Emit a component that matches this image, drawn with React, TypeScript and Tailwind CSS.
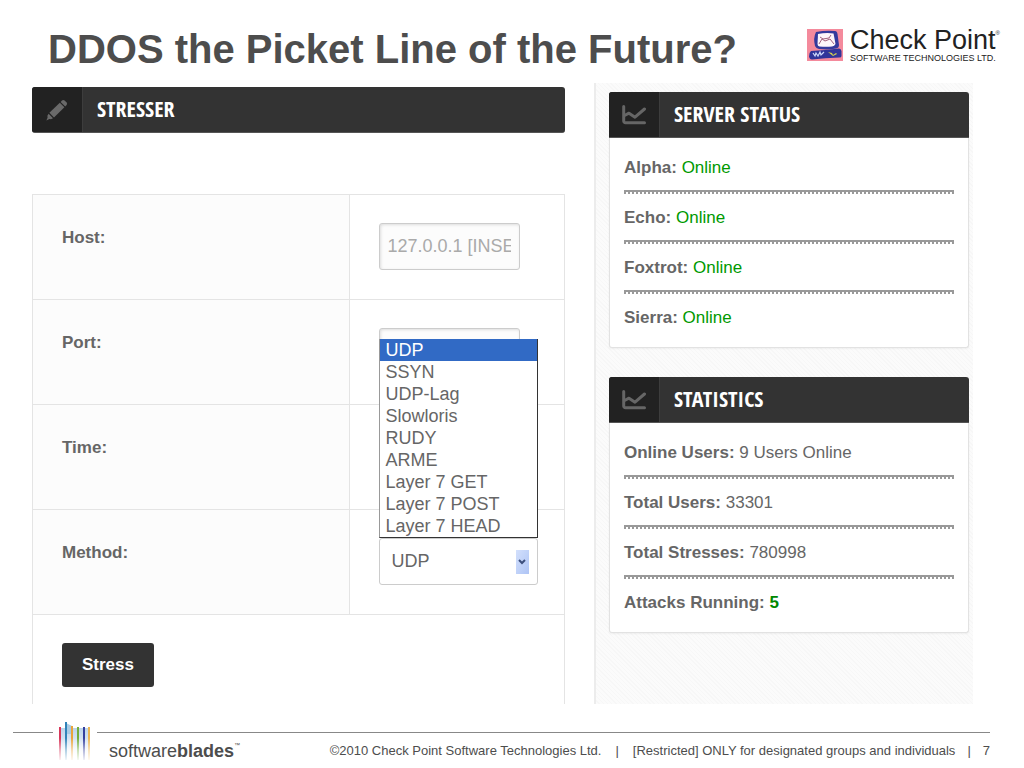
import { useState } from "react";
import type { ReactNode } from "react";

const methods = ["UDP", "SSYN", "UDP-Lag", "Slowloris", "RUDY", "ARME", "Layer 7 GET", "Layer 7 POST", "Layer 7 HEAD"];

const servers = ["Alpha", "Echo", "Foxtrot", "Sierra"];

const stats = [
  { label: "Online Users", value: "9 Users Online" },
  { label: "Total Users", value: "33301" },
  { label: "Total Stresses", value: "780998" },
];

function PencilIcon() {
  return (
    <svg viewBox="0 0 24 24" className="w-6 h-6" fill="#6a6a6a" aria-hidden="true">
      <path d="M17 2.500a2 2 0 0 1 2.600 0l2 2a2 2 0 0 1 0 2.600l-1.400 1.400-4.600-4.600z" />
      <path d="M14.800 4.700l4.600 4.600L9 19.400l-4.600-4.600z" />
      <path d="M3.600 15.800l4.400 4.400-2 1-1.600-.2-3 1.400 1.200-3-.2-1.600z" />
    </svg>
  );
}

function ChartIcon() {
  return (
    <svg viewBox="0 0 24 20" className="w-6 h-5" fill="none" stroke="#666" strokeLinecap="round" aria-hidden="true">
      <path d="M1.700 1.500v14.500a1.800 1.800 0 0 0 1.800 1.800H22.500" strokeWidth="3" />
      <path d="M2.500 10.500l4.500-2.300 6 4L22.500 4" strokeWidth="3" strokeLinejoin="round" />
    </svg>
  );
}

function CheckPointMark() {
  return (
    <svg viewBox="0 0 36 32" className="mt-[2px] w-9 h-8 shrink-0" aria-hidden="true">
      <rect width="36" height="32" fill="#f48a9c" />
      <path d="M9 3q10-2 19-1 2 0 2.500 3L32 16q0 3-3 3.500-8 1.500-17 .5-3-.5-4-3Q6 9 9 3z" fill="#343a9c" />
      <path d="M11 5q8-1.500 15.500-.5L28.500 15q-1 2-3.500 2.500-6 .5-12.500 0-2-.5-2-2.500z" fill="#fdf6fa" />
      <path d="M12 15l3-5 3 2 5-2 4 5M13 8l3 2 6-1M24 6l-2 3" fill="none" stroke="#a0607c" />
      <path d="M4 22q14-1 28-2.500 2 0 2.500 2.500v5q0 1.500-2 1.500Q18 29 5 30.500q-2.500 0-3-3 0-4 2-5.500z" fill="#30359a" />
      <path d="M6 24l2 3 1-3 2 3 2-4 1 3 3-3" fill="none" stroke="#cdd8fa" strokeWidth="1.200" />
      <path d="M21 23l4 1 1 2 3-2 1 1-4 2z" fill="#d2d34e" />
    </svg>
  );
}

function BladesMark() {
  const blades = [
    { x: 0, y: 5, color: "#d7375a" },
    { x: 6, y: 0, color: "#2f83b8" },
    { x: 12, y: 4, color: "#eaa43a" },
    { x: 18, y: 5, color: "#72ae3b" },
    { x: 24, y: 5, color: "#353f9e" },
    { x: 29, y: 5, color: "#edb653" },
  ];
  return (
    <svg viewBox="0 0 32 40" className="w-8 h-10" aria-hidden="true">
      <defs>
        <linearGradient id="shine" x1="0" y1="0" x2="0" y2="1">
          <stop offset="0" stopColor="#bcd4ea" />
          <stop offset="0.6" stopColor="#e4ecf6" />
          <stop offset="1" stopColor="#fff" />
        </linearGradient>
        <linearGradient id="fade" x1="0" y1="0" x2="0" y2="1">
          <stop offset="0.4" stopColor="#fff" stopOpacity="0" />
          <stop offset="0.7" stopColor="#fff" stopOpacity="0.6" />
          <stop offset="1" stopColor="#fff" />
        </linearGradient>
      </defs>
      <rect x="2" y="6" width="29" height="29" fill="url(#shine)" />
      <path d="M7 1l6 3v8H7z" fill="#a9cbe4" />
      {blades.map((b) => (
        <rect key={b.x} x={b.x} y={b.y} width="2" height={38 - b.y} fill={b.color} />
      ))}
      <rect y="0" width="32" height="40" fill="url(#fade)" />
    </svg>
  );
}

function PanelHeader({ icon, title, className = "" }: { icon: ReactNode; title: string; className?: string }) {
  return (
    <div className={`flex h-[46px] overflow-hidden border-b border-[#555] bg-[#333] ${className}`}>
      <div className="flex w-[51px] shrink-0 items-center justify-center border-r border-[#3d3d3d] bg-[#222]">{icon}</div>
      <h2 className="pl-[14px] font-['Open_Sans_Condensed','Liberation_Sans',sans-serif] text-[22px] leading-[42px] font-bold text-white">
        {title}
      </h2>
    </div>
  );
}

function Panel({ title, children }: { title: string; children: ReactNode }) {
  return (
    <section>
      <PanelHeader icon={<ChartIcon />} title={title} className="rounded-t-[3px]" />
      <ul className="rounded-b-[3px] border border-t-0 border-[#e2e2e2] bg-white px-[14px] pt-[18px] pb-[17px] shadow-xs">
        {children}
      </ul>
    </section>
  );
}

function PanelRow({ label, children }: { label: string; children: ReactNode }) {
  return (
    <li className="group leading-6">
      <b>{label}:</b> {children}
      <div className="mt-[10px] mb-3 h-1 border-b-2 border-dotted border-[#999] bg-[#999] bg-clip-padding group-last:hidden" />
    </li>
  );
}

function FormRow({ id, label, children }: { id: string; label: string; children: ReactNode }) {
  return (
    <tr className="h-[105px] border-b border-[#e4e4e4]">
      <th scope="row" className="w-[59.5%] border-r border-[#e4e4e4] bg-[#fcfcfc] pt-7 pl-[29px] text-left align-top leading-[30px]">
        <label htmlFor={id}>{label}:</label>
      </th>
      <td className="pt-7 pl-[29px] align-top">{children}</td>
    </tr>
  );
}

const inputClass =
  "block h-[47px] w-[141px] rounded-[3px] border border-[#ccc] bg-[#fcfcfc] px-2 text-[18px] shadow-[inset_1px_1px_3px_#ddd] placeholder:text-[#aaa]";

export default function App() {
  const [method, setMethod] = useState("UDP");

  return (
    <div className="flex min-h-screen flex-col bg-white font-['Liberation_Sans',Arial,sans-serif] text-[17px] text-[#666]">
      <header className="flex h-[83px] items-start justify-between pr-6 pl-12">
        <h1 className="pt-6 text-[40px] leading-[50px] font-bold text-[#4d4d4d]">DDOS the Picket Line of the Future?</h1>
        <div className="flex gap-[7px] pt-[27px] text-[#222]">
          <CheckPointMark />
          <div className="whitespace-nowrap">
            <div className="flex text-[27px] leading-[26px]">
              Check Point<span className="text-[6px] leading-3">®</span>
            </div>
            <div className="text-[9px] leading-[10px]">SOFTWARE TECHNOLOGIES LTD.</div>
          </div>
        </div>
      </header>

      <main className="grid flex-1 grid-cols-[533fr_379fr] gap-x-[29px] pr-[51px] pl-8">
        <section className="pt-1">
          <PanelHeader icon={<PencilIcon />} title="STRESSER" className="rounded-[3px]" />
          <form className="mt-[61px]" onSubmit={(e) => e.preventDefault()}>
            <table className="w-full table-fixed border-collapse border-x border-t border-[#e4e4e4]">
              <tbody>
                <FormRow id="host" label="Host">
                  <input id="host" placeholder="127.0.0.1 [INSERT IP]" className={inputClass} />
                </FormRow>
                <FormRow id="port" label="Port">
                  <input id="port" className={inputClass} />
                </FormRow>
                <FormRow id="time" label="Time">
                  <input id="time" className={inputClass} />
                </FormRow>
                <FormRow id="method" label="Method">
                  <div className="relative w-[159px]">
                    <select
                      id="method"
                      value={method}
                      onChange={(e) => setMethod(e.target.value)}
                      className="block h-[47px] w-full appearance-none rounded-[3px] border border-[#ccc] bg-white pl-3 text-[18px]"
                    >
                      {methods.map((m) => (
                        <option key={m}>{m}</option>
                      ))}
                    </select>
                    <span className="pointer-events-none absolute top-3 right-[9px] flex h-6 w-[13px] items-center justify-center bg-linear-to-br from-[#d3e0fc] to-[#aec4f5]">
                      <svg viewBox="0 0 8 6" className="h-[6px] w-2" fill="none" stroke="#3c4f7c" strokeWidth="2" aria-hidden="true">
                        <path d="M1 1l3 3 3-3" />
                      </svg>
                    </span>
                    <ul className="absolute bottom-[47px] left-0 w-full border border-t-0 border-[#333] border-l-[#999] bg-white text-[18px] leading-[22px]">
                      {methods.map((m) => (
                        <li
                          key={m}
                          onClick={() => setMethod(m)}
                          className={`pl-[6px] ${m === method ? "bg-[#316ac5] text-white" : ""}`}
                        >
                          {m}
                        </li>
                      ))}
                    </ul>
                  </div>
                </FormRow>
                <tr>
                  <td colSpan={2} className="pt-7 pb-[17px] pl-[29px]">
                    <button type="submit" className="block h-11 w-[92px] rounded-[3px] bg-[#333] font-bold text-white">
                      Stress
                    </button>
                  </td>
                </tr>
              </tbody>
            </table>
          </form>
        </section>

        <aside className="flex flex-col gap-[29px] border-l-2 border-[#ececec] bg-[repeating-linear-gradient(45deg,#fbfbfb_0px,#fbfbfb_2px,#f7f7f7_2px,#f7f7f7_3px)] pt-[9px] pr-1 pl-[13px]">
          <Panel title="SERVER STATUS">
            {servers.map((name) => (
              <PanelRow key={name} label={name}>
                <span className="text-[#090]">Online</span>
              </PanelRow>
            ))}
          </Panel>
          <Panel title="STATISTICS">
            {stats.map((s) => (
              <PanelRow key={s.label} label={s.label}>
                {s.value}
              </PanelRow>
            ))}
            <PanelRow label="Attacks Running">
              <b className="text-[#080]">5</b>
            </PanelRow>
          </Panel>
        </aside>
      </main>

      <footer className="flex h-16 items-start pr-[34px] pl-[13px] text-[#4d4d4d]">
        <div className="mt-7 w-10 border-t border-[#888]" />
        <div className="mx-[6px] pt-[18px]">
          <BladesMark />
        </div>
        <div className="mt-7 flex flex-1 items-center justify-between border-t border-[#888] pt-1 pl-3 whitespace-nowrap">
          <div className="flex text-[18px] leading-7">
            software<b>blades</b>
            <span className="text-[6px] leading-4">™</span>
          </div>
          <div className="flex text-[13px]">
            <span>©2010 Check Point Software Technologies Ltd.</span>
            <span className="mx-[14px]">|</span>
            <span>[Restricted] ONLY for designated groups and individuals</span>
            <span className="mx-3">|</span>
            <span>7</span>
          </div>
        </div>
      </footer>
    </div>
  );
}
